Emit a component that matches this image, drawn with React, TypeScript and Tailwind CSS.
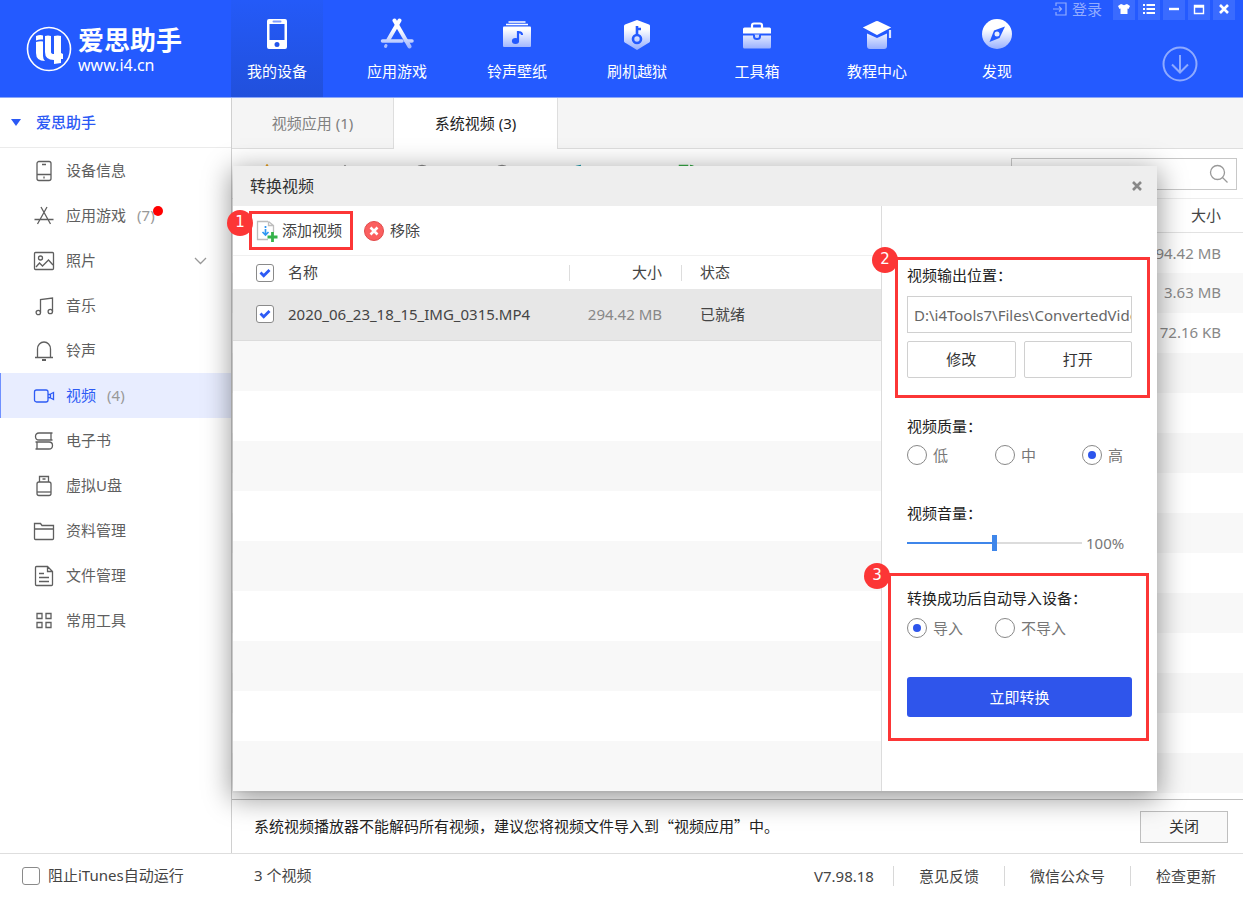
import { useState, type ReactNode } from "react";

const gradId = (name: string) => `fade-${name}`;

function NavIcon({ name, children }: { name: string; children: (fill: string) => ReactNode }) {
  return (
    <svg width="34" height="32" viewBox="0 0 34 32" aria-hidden="true">
      <defs>
        <linearGradient id={gradId(name)} x1="0" y1="0" x2="0" y2="32" gradientUnits="userSpaceOnUse">
          <stop offset="0.35" stopColor="#fff" />
          <stop offset="1" stopColor="#93acff" />
        </linearGradient>
      </defs>
      {children(`url(#${gradId(name)})`)}
    </svg>
  );
}

const NAV = [
  {
    label: "我的设备",
    icon: (
      <NavIcon name="device">
        {() => (
          <>
            <path fill="#fff" fillRule="evenodd" d="M9 1h16a2 2 0 0 1 2 2v26a2 2 0 0 1-2 2H9a2 2 0 0 1-2-2V3a2 2 0 0 1 2-2zm.5 5v16h15V6zM17 24a2.500 2.500 0 1 0 0 5 2.500 2.500 0 0 0 0-5z" />
            <path d="M13.500 3.500h7" stroke="#7d9cff" strokeWidth="2" strokeLinecap="round" />
          </>
        )}
      </NavIcon>
    ),
  },
  {
    label: "应用游戏",
    icon: (
      <NavIcon name="apps">
        {(f) => (
          <g stroke={f} fill="none" strokeLinecap="round">
            <path d="M19.500 2.500 8.500 21.500" strokeWidth="4" />
            <path d="M14.500 2.500l15 26" strokeWidth="4" />
            <path d="M2.500 23.010H22M26 23h6" strokeWidth="3.500" />
            <path d="M5.500 28.500l.5-1" strokeWidth="3" />
          </g>
        )}
      </NavIcon>
    ),
  },
  {
    label: "铃声壁纸",
    icon: (
      <NavIcon name="music">
        {(f) => (
          <>
            <path d="M8.500 4h17M6 6.500h22" stroke="#fff" strokeWidth="1.300" />
            <rect x="3" y="8.500" width="28" height="20.500" rx="1" fill={f} />
            <path d="M18 13v9.500M18 14q4 0 4 3" stroke="#245aff" strokeWidth="2.200" fill="none" />
            <ellipse cx="15.500" cy="23" rx="3.600" ry="2.900" fill="#245aff" />
          </>
        )}
      </NavIcon>
    ),
  },
  {
    label: "刷机越狱",
    icon: (
      <NavIcon name="flash">
        {(f) => (
          <>
            <path fill={f} d="M17 2l12 4.500q1 .4 1 1.500v15q0 1-.8 1.500L17 32 4.800 24.500Q4 24 4 23V8q0-1 1-1.500z" />
            <circle cx="17" cy="21" r="4" fill="none" stroke="#245aff" strokeWidth="2.600" />
            <path d="M17 17V8M17 11h4" stroke="#245aff" strokeWidth="2.600" />
          </>
        )}
      </NavIcon>
    ),
  },
  {
    label: "工具箱",
    icon: (
      <NavIcon name="toolbox">
        {(f) => (
          <>
            <path d="M12 10V7.500Q12 5.500 14 5.500h6q2 0 2 2V10" stroke="#fff" strokeWidth="2.200" fill="none" />
            <path fill="#fff" d="M4.500 9.500h25Q31 9.500 31 11v4.500H3V11q0-1.500 1.500-1.500z" />
            <path fill={f} d="M3 17.500h28V29q0 1.500-1.500 1.500h-25Q3 30.500 3 29z" />
            <path d="M14 16.500v2q0 2.500 3 2.500t3-2.500v-2" stroke="#245aff" strokeWidth="2" fill="#c9d6ff" />
          </>
        )}
      </NavIcon>
    ),
  },
  {
    label: "教程中心",
    icon: (
      <NavIcon name="course">
        {(f) => (
          <>
            <path fill={f} d="M7 15.500l10 4.500 10-4.500V28q0 3-3 3H10q-3 0-3-3z" />
            <path fill="#fff" stroke="#245aff" strokeWidth="1.500" d="M15.500 2.500 3 8.500q-1.500 1 0 2l14 7.500 14-7.500q1.500-1 0-2l-12.500-6q-1.500-.7-3 0z" />
            <path d="M30 12v8" stroke="#dbe4ff" strokeWidth="2.200" />
          </>
        )}
      </NavIcon>
    ),
  },
  {
    label: "发现",
    icon: (
      <NavIcon name="discover">
        {(f) => (
          <>
            <circle cx="17" cy="16" r="15" fill={f} />
            <path fill="#245aff" d="M25 8.500 19.500 20 9.500 24 14 12.500z" />
            <circle cx="17" cy="16" r="2.500" fill="#e8eeff" />
          </>
        )}
      </NavIcon>
    ),
  },
];

function SideIcon({ children }: { children: ReactNode }) {
  return (
    <svg className="shrink-0" width="22" height="22" viewBox="0 0 22 22" fill="none" stroke="currentColor" strokeWidth="1.300" aria-hidden="true">
      {children}
    </svg>
  );
}

const SIDE: { label: string; count?: number; dot?: boolean; expand?: boolean; icon: ReactNode }[] = [
  { label: "设备信息", icon: <><rect x="4" y="1.500" width="14" height="19" rx="2" /><path d="M9 4.500h4M4 14.500h14M11 16.500v2" /></> },
  { label: "应用游戏", count: 7, dot: true, icon: <path d="M8 2l9.500 17M14 2 4.500 19M1.500 14.500h19" /> },
  { label: "照片", expand: true, icon: <><rect x="1.500" y="2.500" width="19" height="17" rx="1" /><circle cx="7.500" cy="8" r="2" /><path d="M3 17l3.500-4 3 3 6-6 4.500 5" /></> },
  { label: "音乐", icon: <><path d="M7.500 17.500V4.500L19.500 3v13.500" /><circle cx="5.300" cy="17.500" r="2.200" /><circle cx="17.300" cy="16.500" r="2.200" /></> },
  { label: "铃声", icon: <><path d="M4.500 17.500V9a6.500 7 0 0 1 13 0v8.500M2 17.500h18" /><path d="M9 20h4" strokeWidth="2" /></> },
  { label: "视频", count: 4, icon: <><rect x="1.500" y="5" width="13.500" height="12" rx="2" /><path d="M15 9.500l2.500-.2v3.400L15 12.500M17.500 9l3-1.500v7l-3-1.500" /></> },
  { label: "电子书", icon: <><path d="M19.500 3H6q-3.500 0-3.500 3.500T6 10h13.500M18 3v7M2.500 12H16q3.500 0 3.500 3.500T16 19H2.500M4 12v7" /></> },
  { label: "虚拟U盘", icon: <><path d="M6.500 7V1.500h9V7M9.500 4h3" /><rect x="4" y="7" width="14" height="13.500" rx="2" /><path d="M4 17h14" /></> },
  { label: "资料管理", icon: <path d="M1.500 18.500V3.500h6l1.500 2h11.500v13q0 1-1 1h-17q-1 0-1-1zM1.500 9h19" /> },
  { label: "文件管理", icon: <path d="M14.500 1.500h-11q-1 0-1 1v17q0 1 1 1h15q1 0 1-1V6.500zv5h5M6 8.500h5M6 12.500h10M6 16.500h10" /> },
  { label: "常用工具", icon: <path d="M4 3.500h5v5H4zM13 3.500h5v5h-5zM4 12.500h5v5H4zM13 12.500h5v5h-5z" /> },
];

function Checkbox({ id, label, defaultChecked }: { id: string; label?: string; defaultChecked?: boolean }) {
  return (
    <span className="grid size-[18px] place-items-center">
      <input
        id={id}
        type="checkbox"
        aria-label={label}
        defaultChecked={defaultChecked}
        className="peer col-start-1 row-start-1 size-[18px] appearance-none rounded-[3px] border border-[#8a8a8a] bg-white"
      />
      <svg className="pointer-events-none invisible col-start-1 row-start-1 peer-checked:visible" width="12" height="12" viewBox="0 0 12 12" aria-hidden="true">
        <path d="M1.500 5.500l3.200 3.200L10.500 3" fill="none" stroke="#2d5bf5" strokeWidth="2.800" />
      </svg>
    </span>
  );
}

function Radio({ name, label, defaultChecked }: { name: string; label: string; defaultChecked?: boolean }) {
  return (
    <label className="flex items-center gap-[6px] whitespace-nowrap text-[#777]">
      <span className="grid size-5 place-items-center">
        <input
          type="radio"
          name={name}
          defaultChecked={defaultChecked}
          className="peer col-start-1 row-start-1 size-5 appearance-none rounded-full border border-[#888] bg-white"
        />
        <span className="pointer-events-none invisible col-start-1 row-start-1 size-2 rounded-full bg-[#2d55ec] peer-checked:visible" />
      </span>
      {label}
    </label>
  );
}

function Callout({ n, className, badge }: { n: number; className: string; badge: string }) {
  return (
    <div className={`pointer-events-none absolute border-[3px] border-[#fc3636] ${className}`}>
      <span
        className={`absolute flex size-[26px] items-center justify-center rounded-full bg-[#fc3636] pb-[2px] font-['DejaVu_Sans',sans-serif] text-[15px] leading-none text-white ${badge}`}
      >
        {n}
      </span>
    </div>
  );
}

function Header() {
  return (
    <header className="relative flex h-[98px] shrink-0 border-b border-[#8aa6f8] bg-[#245aff] text-white">
      <div className="flex w-[231px] shrink-0 items-center gap-[6px] pl-[26px]">
        <svg width="46" height="46" viewBox="0 0 46 46" aria-hidden="true">
          <circle cx="23" cy="23" r="21.500" fill="none" stroke="#fff" strokeWidth="1.600" />
          <g fill="#fff">
            <path d="M10 10q4-1.500 7-.5v4q-4-.5-7 1zM10 16q4-1 7-.5V30q0 3 2 5-9 0-9-8z" />
            <path d="M19 10q3-1 6 0v16q0 2 3 2V10q4-1 7 0v17l2 1v5h-2v4l-7 1v-4q-9 0-9-8z" />
          </g>
        </svg>
        <div>
          <div className="text-[26px] leading-[32px] font-bold">爱思助手</div>
          <div className="text-[16px] leading-[18px]">www.i4.cn</div>
        </div>
      </div>
      <nav className="flex gap-7">
        {NAV.map((item, i) => (
          <a
            key={item.label}
            href="#"
            className={
              i === 0
                ? "flex w-[92px] flex-col items-center bg-linear-to-b from-[#245af8] to-[#2150dc] pt-[18px]"
                : "flex w-[92px] flex-col items-center pt-[18px]"
            }
          >
            {item.icon}
            <span className="mt-[9px] leading-6">{item.label}</span>
          </a>
        ))}
      </nav>
      <div className="absolute top-0 right-2 flex items-start gap-[3px]">
        <a href="#" className="mr-2 flex h-[18px] items-center gap-[5px] text-[#92acff]">
          <svg width="14" height="14" viewBox="0 0 14 14" fill="none" stroke="currentColor" strokeWidth="1.200" aria-hidden="true">
            <path d="M3 4V1h10v12H3v-3M0 7h8M6 4.500 8.500 7 6 9.500" />
          </svg>
          登录
        </a>
        {[
          { t: "皮肤", d: <path fill="#fff" d="M4 2l2 .8q1 .7 2 0L10 2l3 2-1.500 3-1-.4V12h-7V6.600l-1 .4L1 4z" /> },
          { t: "菜单", d: <path stroke="#fff" strokeWidth="2" d="M1 3h2M1 7h2M1 11h2M4.500 3H13M4.500 7H13M4.500 11H13" /> },
          { t: "最小化", d: <path stroke="#fff" strokeWidth="2.400" d="M2 7h10" /> },
          { t: "最大化", d: <path fill="none" stroke="#fff" strokeWidth="1.400" d="M2.500 3.500h9v8h-9zM2 3.500h10M2 5h10" /> },
          { t: "关闭窗口", d: <path stroke="#fff" strokeWidth="2.600" d="M3 3l8 8M11 3l-8 8" /> },
        ].map((b) => (
          <button key={b.t} type="button" aria-label={b.t} className="flex h-5 w-[22px] items-center justify-center bg-[#3a6bff] pb-[2px]">
            <svg width="14" height="14" viewBox="0 0 14 14" aria-hidden="true">{b.d}</svg>
          </button>
        ))}
      </div>
      <button type="button" aria-label="下载" className="mt-[46px] mr-[45px] ml-auto h-9 text-[#8eaaff]">
        <svg width="36" height="36" viewBox="0 0 36 36" fill="none" stroke="currentColor" strokeWidth="2" aria-hidden="true">
          <circle cx="18" cy="18" r="16.500" />
          <path d="M18 9v17M10 18.500l8 8 8-8" />
        </svg>
      </button>
    </header>
  );
}

function Sidebar() {
  return (
    <aside className="w-[232px] shrink-0 border-r border-[#d0d0d0] bg-white">
      <button type="button" className="flex h-[50px] w-full items-center gap-[15px] border-b border-[#ebebeb] pl-[11px] font-medium text-[#2b59f5]">
        <svg width="10" height="7" viewBox="0 0 10 7" aria-hidden="true"><path d="M0 0h10L5 7z" fill="currentColor" /></svg>
        爱思助手
      </button>
      <nav>
        {SIDE.map((s) => {
          const active = s.label === "视频";
          return (
            <a
              key={s.label}
              href="#"
              className={
                active
                  ? "flex h-[45px] items-center border-l border-[#6f90ff] bg-[#e8edff] pl-8 text-[#2d5bf5]"
                  : "flex h-[45px] items-center pl-[33px] text-[#5f5f5f]"
              }
            >
              <SideIcon>{s.icon}</SideIcon>
              <span className="ml-[11px]">{s.label}</span>
              {s.count !== undefined && (
                <span className="relative ml-[11px] text-[#999]">
                  ({s.count})
                  {s.dot && <span className="absolute top-[2px] -right-2 size-[10px] rounded-full bg-[#ff0000]" />}
                </span>
              )}
              {s.expand && (
                <svg className="mr-6 ml-auto" width="13" height="8" viewBox="0 0 13 8" fill="none" stroke="#999" strokeWidth="1.300" aria-hidden="true">
                  <path d="M1 1l5.500 5.500L12 1" />
                </svg>
              )}
            </a>
          );
        })}
      </nav>
    </aside>
  );
}

function ConvertDialog() {
  const [volume, setVolume] = useState(100);
  const sliderFill = { backgroundImage: `linear-gradient(to right, #3f86ea ${volume / 2}%, #dcdcdc ${volume / 2}%)` };
  return (
    <section
      role="dialog"
      aria-labelledby="dialog-title"
      className="absolute top-[68px] right-[86px] bottom-[62px] left-[1px] z-10 flex flex-col bg-white shadow-[0_6px_26px_2px_rgba(0,0,0,0.4)]"
    >
      <header className="flex h-10 shrink-0 items-center justify-between bg-[#eee] pr-[14px] pl-[17px]">
        <h2 id="dialog-title" className="text-base text-[#333]">转换视频</h2>
        <button type="button" aria-label="关闭对话框">
          <svg width="12" height="12" viewBox="0 0 12 12" stroke="#888" strokeWidth="2.600" aria-hidden="true"><path d="M2 2l8 8M10 2l-8 8" /></svg>
        </button>
      </header>
      <div className="flex flex-1">
        <div className="flex min-w-0 flex-1 flex-col">
          <div className="flex h-[50px] shrink-0 items-center gap-[22px] border-b border-[#f0f0f0] pl-[23px]">
            <div className="relative">
              <button type="button" className="flex items-center gap-1 text-[#444]">
                <svg width="22" height="22" viewBox="0 0 22 22" fill="none" aria-hidden="true">
                  <path d="M12 1.500H1.500v18H12M12.500 1.500l5 4V12M12.500 1.500v4h5" stroke="#bdbdbd" strokeWidth="1.300" />
                  <path d="M9.500 6v2M9.500 9v6M6.500 12l3 3 3-3" stroke="#2f97f3" strokeWidth="1.700" />
                  <path d="M16.500 12v10M11.500 17h10" stroke="#35b24a" strokeWidth="2.800" />
                </svg>
                添加视频
              </button>
              <Callout n={1} className="-top-2 -right-[11px] -bottom-2 -left-[7px]" badge="-top-1 -left-[25px]" />
            </div>
            <button type="button" className="flex items-center gap-[6px] text-[#444]">
              <svg width="20" height="20" viewBox="0 0 20 20" aria-hidden="true">
                <circle cx="10" cy="10" r="9.500" fill="#fb5f5f" stroke="#e04a4a" />
                <path d="M6.500 6.500l7 7M13.500 6.500l-7 7" stroke="#fff" strokeWidth="2.600" />
              </svg>
              移除
            </button>
          </div>
          <table className="w-full table-fixed text-left text-[#444]">
            <colgroup>
              <col className="w-[55px]" />
              <col />
              <col className="w-[112px]" />
              <col className="w-[200px]" />
            </colgroup>
            <thead>
              <tr className="h-[33px]">
                <th className="pl-[23px]"><Checkbox id="all" label="全选" defaultChecked /></th>
                <th className="font-normal">名称</th>
                <th className="font-normal">
                  <span className="flex h-4 items-center justify-end border-l border-[#ddd] pr-[19px]">大小</span>
                </th>
                <th className="font-normal">
                  <span className="flex h-4 items-center border-l border-[#ddd] pl-[18px]">状态</span>
                </th>
              </tr>
            </thead>
            <tbody>
              <tr className="h-[51px] border-b border-[#dcdcdc] bg-[#e7e7e7]">
                <td className="pl-[23px]"><Checkbox id="file-0" label="2020_06_23_18_15_IMG_0315.MP4" defaultChecked /></td>
                <td>2020_06_23_18_15_IMG_0315.MP4</td>
                <td className="pr-[19px] text-right text-[#888]">294.42 MB</td>
                <td className="pl-[19px]">已就绪</td>
              </tr>
            </tbody>
          </table>
          <div className="flex-1 bg-[repeating-linear-gradient(#f8f8f8_0px_50px,#ffffff_50px_100px)]" />
        </div>
        <div className="flex w-[276px] shrink-0 flex-col border-l border-[#dcdcdc] px-[25px] pt-[57px] text-[#222]">
          <div className="relative">
            <label htmlFor="out" className="block leading-6">视频输出位置：</label>
            <input id="out" type="text" defaultValue="D:\i4Tools7\Files\ConvertedVideo" className="mt-[9px] block h-[37px] w-full border border-[#d0d0d0] bg-white pl-[6px] text-[#666] outline-none" />
            <div className="mt-2 grid grid-cols-2 gap-2">
              <button type="button" className="h-[37px] rounded-[2px] border border-[#d0d0d0] bg-white text-[#333]">修改</button>
              <button type="button" className="h-[37px] rounded-[2px] border border-[#d0d0d0] bg-white text-[#333]">打开</button>
            </div>
            <Callout n={2} className="-top-[6px] -right-[18px] -bottom-5 -left-3" badge="-top-[13px] -left-[26px]" />
          </div>
          <fieldset className="mt-9">
            <legend className="leading-6">视频质量：</legend>
            <div className="mt-[5px] grid h-6 grid-cols-[88px_87px_auto]">
              <Radio name="quality" label="低" />
              <Radio name="quality" label="中" />
              <Radio name="quality" label="高" defaultChecked />
            </div>
          </fieldset>
          <div className="mt-[34px]">
            <label htmlFor="volume" className="block leading-6">视频音量：</label>
            <div className="mt-[6px] flex h-6 items-center gap-1 text-[#777]">
              <input
                id="volume"
                type="range"
                min={0}
                max={200}
                value={volume}
                onChange={(e) => setVolume(Number(e.target.value))}
                style={sliderFill}
                className="h-[2px] w-[175px] appearance-none bg-[#dcdcdc] [&::-webkit-slider-thumb]:h-4 [&::-webkit-slider-thumb]:w-[5px] [&::-webkit-slider-thumb]:appearance-none [&::-webkit-slider-thumb]:bg-[#3f86ea]"
              />
              <span>{volume}%</span>
            </div>
          </div>
          <div className="relative mt-[31px]">
            <fieldset>
              <legend className="leading-6">转换成功后自动导入设备：</legend>
              <div className="mt-[6px] grid h-6 grid-cols-[88px_auto]">
                <Radio name="import" label="导入" defaultChecked />
                <Radio name="import" label="不导入" />
              </div>
            </fieldset>
            <button type="button" className="mt-[37px] h-10 w-full rounded-[3px] bg-[#2f55eb] text-white">立即转换</button>
            <Callout n={3} className="-top-[13px] -right-[17px] -bottom-6 -left-[19px]" badge="-top-[13px] -left-[27px]" />
          </div>
        </div>
      </div>
    </section>
  );
}

const TOOLS = [
  { t: "导入视频", c: "text-[#e8a020]", gap: "ml-[25px]", d: <path fill="currentColor" d="M10 1l3 5 6 4-6 3-3 6-3-6-6-3 6-4z" /> },
  { t: "导出视频", c: "text-[#888]", gap: "ml-[58px]", d: <path d="M10 18V2M5 7l5-5 5 5" /> },
  { t: "刷新", c: "text-[#888]", gap: "ml-[57px]", d: <circle cx="10" cy="10" r="8.500" /> },
  { t: "删除", c: "text-[#888]", gap: "ml-[60px]", d: <circle cx="10" cy="10" r="8.500" /> },
  { t: "转换", c: "text-[#1b9aaa]", gap: "ml-[56px]", d: <path strokeWidth="2.500" d="M13 2Q3 3 3 12M3 12l4 4" /> },
  { t: "制作", c: "text-[#35a845]", gap: "ml-[90px]", d: <path strokeWidth="2.500" d="M2 2h7v7H2zM12 2q5 0 6 6M12 12h6v6h-6z" /> },
];

function Main() {
  return (
    <main className="relative flex min-w-0 flex-1 flex-col bg-white">
      <div className="flex h-[51px] shrink-0 bg-[#f5f5f5] text-center">
        <button type="button" className="w-[161px] border-b border-[#dedede] text-[#808080]">视频应用 (1)</button>
        <button type="button" className="w-[165px] border-x border-[#dedede] bg-white text-[#222]">系统视频 (3)</button>
        <div className="flex-1 border-b border-[#dedede]" />
      </div>
      <div className="flex h-[49px] shrink-0 items-center">
        {TOOLS.map((t) => (
          <button key={t.t} type="button" aria-label={t.t} className={`${t.gap} ${t.c}`}>
            <svg width="20" height="20" viewBox="0 0 20 20" fill="none" stroke="currentColor" strokeWidth="1.600" aria-hidden="true">
              {t.d}
            </svg>
          </button>
        ))}
        <div className="mr-[6px] ml-auto flex h-8 w-[226px] items-center justify-end border border-[#c8c8c8] bg-white pr-[7px]">
          <input type="search" aria-label="搜索" className="min-w-0 flex-1 outline-none" />
          <svg width="20" height="20" viewBox="0 0 20 20" fill="none" stroke="#999" strokeWidth="1.300" aria-hidden="true">
            <circle cx="8.500" cy="8.500" r="7" /><path d="M13.500 13.500l5 5" />
          </svg>
        </div>
      </div>
      <table className="w-full border-t border-[#ececec] text-right text-[#888]">
        <thead>
          <tr className="h-[34px] border-b border-[#e2e2e2] text-[#444]">
            <th className="pr-[22px] text-right font-normal">大小</th>
          </tr>
        </thead>
        <tbody>
          <tr className="h-10"><td className="pr-[22px]">294.42 MB</td></tr>
          <tr className="h-10 bg-[#f8f8f8]"><td className="pr-[22px]">3.63 MB</td></tr>
          <tr className="h-10"><td className="pr-[22px]">72.16 KB</td></tr>
        </tbody>
      </table>
      <div className="flex-1 bg-[repeating-linear-gradient(#f8f8f8_0px_40px,#ffffff_40px_80px)]" />
      <div className="flex h-[54px] shrink-0 items-center justify-between border-t border-[#c0c0c0] bg-white pr-[15px] pl-[22px] text-[#222]">
        <p className="font-['Noto_Sans_CJK_SC',sans-serif]">系统视频播放器不能解码所有视频，建议您将视频文件导入到“视频应用”中。</p>
        <button type="button" className="h-8 w-[88px] border border-[#bfbfbf] bg-[#f9f9f9] text-[#333]">关闭</button>
      </div>
      <ConvertDialog />
    </main>
  );
}

export default function App() {
  return (
    <div lang="zh-CN" className="flex min-h-screen flex-col bg-white font-['Noto_Sans','Noto_Sans_CJK_SC',sans-serif] text-[15px]">
      <Header />
      <div className="flex flex-1">
        <Sidebar />
        <Main />
      </div>
      <footer className="z-20 flex h-11 shrink-0 items-center border-t border-[#dedede] bg-white text-[#444]">
        <div className="flex w-[254px] items-center gap-2 pl-[22px]">
          <Checkbox id="itunes" />
          <label htmlFor="itunes">阻止iTunes自动运行</label>
        </div>
        <span>3 个视频</span>
        <div className="mr-[2px] ml-auto flex items-center leading-5">
          <span className="pr-[19px]">V7.98.18</span>
          <a href="#" className="border-l border-[#d8d8d8] px-[25px]">意见反馈</a>
          <a href="#" className="border-l border-[#d8d8d8] px-[25px]">微信公众号</a>
          <a href="#" className="border-l border-[#d8d8d8] px-[25px]">检查更新</a>
        </div>
      </footer>
    </div>
  );
}
